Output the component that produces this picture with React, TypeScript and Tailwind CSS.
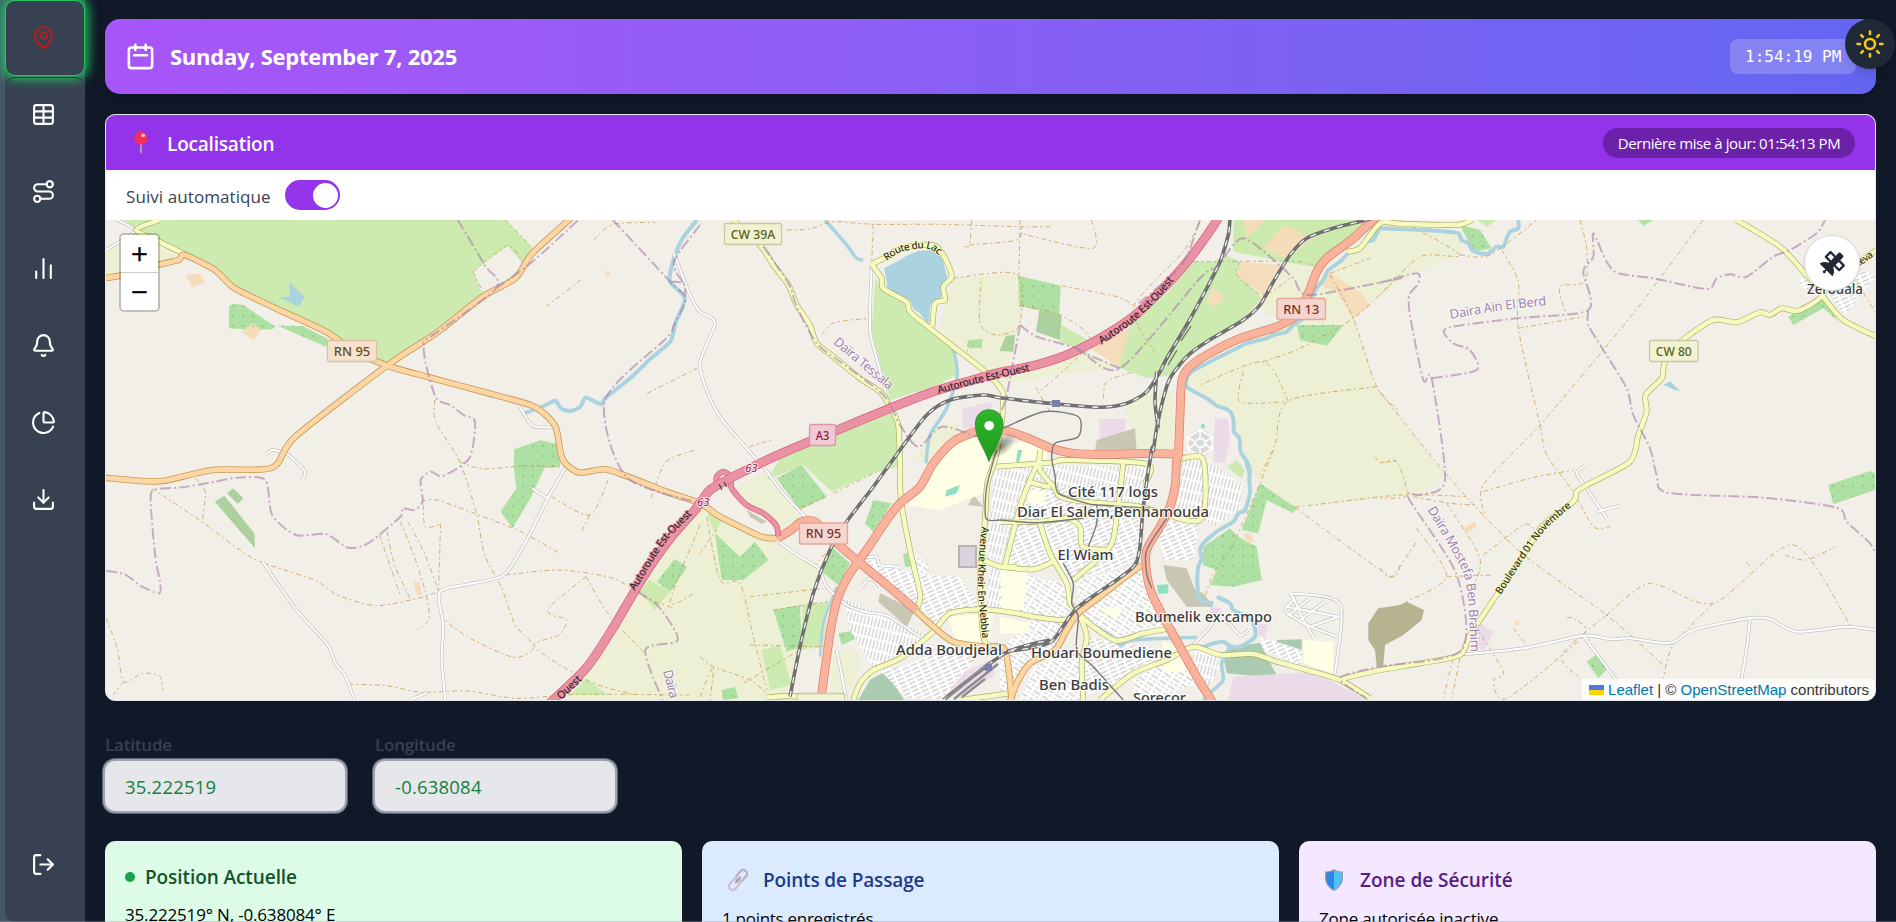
import React from "react";
import {
  Bell,
  ChartNoAxesColumn,
  ChartPie,
  Download,
  LogOut,
  MapPin,
  Route,
  Sun,
  Table,
} from "lucide-react";
import { FaSatellite } from "react-icons/fa6";

type Pt = [number, number];

/* Map survey sheets: origin and scale of each local coordinate grid. */
const SHEETS: Record<string, [number, number, number, number]> = {
  W: [100, 215, 600 / 1568, 1 / 3],
  L: [700, 215, 1 / 3, 1 / 3],
  N: [1000, 215, 1 / 3, 1 / 3],
  S: [700, 450, 1 / 3, 1 / 3],
  C: [1000, 450, 1 / 3, 1 / 3],
  E: [1380, 215, 1 / 3, 1 / 3],
};

function points(src: string): Pt[] {
  let sheet = SHEETS.W;
  const out: Pt[] = [];
  for (const tok of src.trim().split(/\s+/)) {
    if (SHEETS[tok]) {
      sheet = SHEETS[tok];
    } else {
      const [x, y] = tok.split(",").map(Number);
      out.push([sheet[0] + x * sheet[2], sheet[1] + y * sheet[3]]);
    }
  }
  return out;
}

const f = (n: number) => n.toFixed(1);

function area(src: string): string {
  return "M" + points(src).map((p) => `${f(p[0])} ${f(p[1])}`).join("L") + "Z";
}

function curve(src: string): string {
  const p = points(src);
  let d = `M${f(p[0][0])} ${f(p[0][1])}`;
  for (let i = 0; i < p.length - 1; i++) {
    const a = p[i - 1] ?? p[i];
    const b = p[i];
    const c = p[i + 1];
    const e = p[i + 2] ?? c;
    const k = 0.13;
    d += `C${f(b[0] + (c[0] - a[0]) * k)} ${f(b[1] + (c[1] - a[1]) * k)} ${f(c[0] - (e[0] - b[0]) * k)} ${f(c[1] - (e[1] - b[1]) * k)} ${f(c[0])} ${f(c[1])}`;
  }
  return d;
}

const AREAS: [string, string[]][] = [
  ["#eef0d5", [
    "W 16,110 90,50 215,115 200,140 16,180",
    "W 1568,870 1520,930 1420,1100 1330,1290 1190,1455 S 0,750 270,745 300,590 350,400 370,350 340,335 240,285 200,262 120,235 20,180",
    "S 110,110 200,60 300,205 240,240 190,185 130,150",
    "L 755,190 955,178 960,330 905,525 850,465 760,395 720,335",
    "N 0,480 170,430 260,410 350,460 200,475 60,500 0,500",
    "N 370,575 440,530 500,520 520,540 520,705 410,705 400,640",
    "N 1120,40 1200,30 E 245,50 245,115 120,165 0,240 N 1060,310 1130,515 1200,590 E 0,530 195,780 120,840 0,850 C 1200,140 880,170 800,110 750,60 N 700,600 560,500 640,430 930,300 950,200",
    "L 640,740 700,640 790,620 700,745",
    "S 400,600 480,600 470,690 440,745 390,745",
    "N 730,190 850,140 950,165 930,230 880,310 790,300 785,250",
  ]],
  ["#cdebb0", [
    "W 65,15 92,45 155,75 225,120 300,160 350,215 450,270 590,350 640,385 722,430 750,450 845,380 1000,240 975,170 1065,92 1105,145 1135,105 1060,15",
    "L 525,190 550,220 620,265 640,295 690,345 755,390 770,480 700,515 570,555 515,350",
    "L 240,730 350,680 570,590 597,650 S 595,50 520,70 395,125 310,45 200,90",
    "S 310,465 385,455 370,590 300,600",
    "S 20,190 70,205 45,250",
    "S 185,600 240,585 275,705 210,720",
    "N 580,140 640,140 680,120 720,140 730,190 785,250 730,315 600,390 520,480 440,490 350,455 390,330 500,235",
    "N 700,15 1100,15 1040,80 960,160 850,140 700,110",
    "N 185,330 265,375 230,400 180,380",
    "W 1410,1130 1435,1095 1490,1130 1450,1185",
    "W 1270,1390 1325,1440 1230,1440",
    "C 680,50 710,30 735,60 725,85",
    "E 290,15 350,15 320,35",
  ]],
  ["#aee0a3", [
    "W 337,272 350,266 375,270 458,335 450,343 400,345 337,340",
    "W 465,332 530,333 600,375 600,398 580,390",
    "W 1082,703 1150,676 1197,688 1203,755 1162,758 1125,850 1078,940 1047,890 1088,820 1082,760",
    "W 1455,1100 1502,1032 1535,1055 1490,1130",
    "S 230,85 305,45 380,140 300,180",
    "S 520,150 575,160 520,245 495,220",
    "S 395,290 450,340 415,405 365,365",
    "S 45,250 120,320 165,275 205,330 130,390 65,390",
    "S 220,480 300,465 305,590 260,605",
    "S 65,720 105,710 115,745 70,750",
    "S 415,550 470,540 470,565 425,585",
    "S 610,310 630,310 632,350 615,350",
    "S 655,340 680,345 675,370 655,365",
    "L 805,375 848,372 845,400 805,400",
    "N 55,182 182,212 178,300 57,272",
    "N 890,330 1030,330 980,392 900,375",
    "N 545,740 580,740 575,815 545,815",
    "C 780,100 890,175 880,190 800,150 775,250 725,240",
    "C 690,235 715,260 770,290 785,390 700,410 630,405 650,360 608,345 610,290",
    "E 1345,810 1470,768 1485,775 1485,825 1360,868",
    "E 620,1340 650,1318 685,1360 655,1390",
    "E 240,30 300,45 335,100 280,110",
    "E 1225,305 1325,245 1375,320 1330,280 1240,330",
    "E 775,15 820,15 790,32",
  ]],
  ["#add19e", [
    "W 300,860 325,842 403,955 405,1000",
    "W 332,835 348,820 375,850 360,866",
    "N 118,285 185,300 180,375 108,350",
    "L 918,362 945,360 940,410 898,408",
  ]],
  ["#aacbaf", [
    "S 475,750 510,690 555,665 610,745 610,750",
    "C 670,620 700,590 780,578 835,685 680,670",
    "C 155,635 240,625 235,655 155,665",
    "C 830,570 905,568 905,600 830,585",
  ]],
  ["#f5dcba", [
    "W 370,350 400,323 420,345 402,377",
    "W 225,180 262,175 275,202 240,217",
    "W 820,1100 835,1100 842,1140 828,1142",
    "W 1320,168 1332,168 1332,180 1320,180",
    "N 730,15 795,15 740,70",
    "N 850,30 940,70 860,130 790,100",
    "N 725,140 840,150 790,240 710,180",
    "N 640,215 675,250 645,275 620,255",
    "N 990,175 1080,230 1110,270 1060,310 1010,230 960,210",
    "N 270,400 390,340 355,455",
    "C 730,250 750,250 765,275 740,278",
    "E 250,940 285,920 290,935 260,955",
    "E 403,1222 415,1215 420,1228 410,1232",
  ]],
  ["#ebdbe8", [
    "N 297,612 378,612 375,670 300,675",
    "N 645,608 685,612 690,670 675,745 640,740",
    "C 700,680 940,665 1100,750 685,750",
    "C 775,520 805,525 795,565 775,555",
    "C 630,470 665,475 655,510 635,500",
    "E 300,1225 340,1250 310,1310 290,1290",
    "L 785,580 880,560 850,650 790,640",
    "S 740,690 890,620 880,680 740,745",
    "C 410,630 450,630 445,650 410,645",
  ]],
  ["#c7c7b4", [
    "N 290,675 405,640 410,705 285,705",
    "C 490,345 560,355 585,420 610,430 640,470 560,470 500,390",
    "S 540,430 645,480 620,530 535,455",
    "S 820,135 850,170 805,165",
    "S 140,180 200,215 185,222 150,200",
  ]],
  ["#b5b390", [
    "C 1105,520 1135,475 1200,465 E 80,1160 132,1185 125,1215 70,1260 15,1290 10,1350 C 1130,650 1125,600 1105,570",
  ]],
  ["#ffffe5", [
    "L 700,750 760,690 830,665 1040,705 1040,750",
    "S 700,50 745,0 880,0 870,40 850,130 720,180 610,165",
    "C 910,570 1000,575 1000,670 910,640",
    "S 740,500 880,490 870,580 770,570",
    "N 55,680 110,690 115,730 40,740",
  ]],
  ["#8fdfc0", [
    "N 53,705 67,705 58,740 48,740",
    "C 470,405 505,403 505,430 475,432",
    "S 740,120 780,105 770,130 735,140",
    "S 560,550 580,548 585,575 565,570",
    "N 603,628 614,628 614,640 603,640",
  ]],
  ["#aad3df", [
    "W 468,247 495,245 495,203 535,245 520,275",
    "L 552,160 575,148 600,135 620,122 655,108 690,106 712,112 728,135 736,165 742,188 728,215 722,250 700,258 690,275 688,322 680,322 660,295 640,282 632,258 600,240 562,218 558,190",
    "E 850,510 870,498 900,528 885,525",
  ]],
];

const TOWN: [string, string[]][] = [
  ["url(#streetsA)", [
    "S 885,60 C 120,45 440,50 425,170 200,160 130,90 90,90 60,200 0,330 S 860,320",
    "S 430,440 560,500 690,560 520,655 450,540",
    "C 550,30 620,30 725,100 720,180 640,230 600,200 520,200 540,110",
    "C 590,600 650,620 660,650 620,720 570,640",
    "S 870,340 1050,500 860,480",
  ]],
  ["url(#streetsB)", [
    "C 100,90 430,170 410,340 220,390 160,340 90,350 10,345",
    "S 490,320 640,370 780,380 850,480 740,490 690,530 600,440",
    "S 610,650 720,600 840,610 730,745 620,745 540,660",
    "C 250,560 500,600 400,680 250,740",
    "C 780,560 830,575 905,600 905,650 790,600",
    "C 470,215 600,210 580,330 490,330",
    "E 1250,200 1290,170 1330,230 1300,240",
    "E 1340,235 1460,165 1485,190 1395,300",
  ]],
  ["url(#streetsC)", [
    "C 0,360 200,400 230,475 180,510 0,480",
    "C 230,390 410,350 430,370 500,480 530,540 360,560 240,500",
    "C 0,600 100,500 220,520 160,600 60,680 0,740",
    "C 400,690 500,630 560,610 590,700 480,745 400,745",
    "S 630,300 680,340 690,380 650,370",
    "C 100,650 240,600 250,750 60,750",
  ]],
];

const CREAM = [
  "S 915,360 980,370 970,480 905,470",
  "C 80,120 140,125 130,165 85,160",
  "C 485,570 550,600 555,670 490,660",
  "C 0,500 90,520 80,550 0,550",
  "C 300,480 360,470 350,510",
  "C 0,360 80,365 65,480 10,480",
];

const TRACKS = [
  "W 135,820 260,915 400,1030 560,1095 620,1140 720,1172 830,1150 885,1130",
  "W 250,790 275,830 268,915",
  "W 16,1210 45,1300 62,1400 110,1375 155,1382 165,1425",
  "W 62,1400 35,1440",
  "W 875,555 877,620 940,740 985,900 1005,1020 1050,1120 1085,1230 1135,1295 1080,1327 960,1265 895,1210",
  "W 940,740 1000,762 1110,752 1200,757",
  "W 840,860 880,855 990,900 1100,950 1205,1018",
  "W 730,960 785,1140",
  "W 750,950 770,1050 810,1150",
  "W 785,920 820,1020 850,1130 860,1210 830,1245",
  "W 805,920 850,1020 885,1130",
  "W 890,925 885,1125",
  "W 845,870 850,935 890,928",
  "W 1060,1080 1200,1065 1340,1090 1430,1150 1500,1180",
  "W 1270,1085 1175,1175 1180,1200 1220,1215 1200,1260 1135,1295 1280,1400 1400,1440",
  "W 1270,1085 1330,1200 1420,1310",
  "W 1180,845 1280,900 1330,790",
  "W 1280,900 1258,950",
  "W 650,1408 750,1412 840,1432 960,1428 1090,1450 1250,1438 1540,1440",
  "W 1165,275 1260,192",
  "W 1430,535 1560,460",
  "W 1290,75 1340,28 1450,22",
  "W 1440,850 1478,742 1555,705",
  "W 1060,15 1135,105",
  "W 975,170 1065,92 1105,145",
  "W 975,170 1000,230",
  "W 1568,930 1490,1160 1560,1130",
  "L 260,45 330,42 400,20 520,28 720,28 960,35 1050,35",
  "L 520,28 515,145",
  "L 815,15 808,92 785,90",
  "L 808,90 950,75 965,35",
  "L 760,190 950,178 958,330 890,360 840,325 843,190",
  "L 365,358 405,322 510,310",
  "L 805,380 800,420",
  "L 148,695 215,675",
  "N 60,15 57,180",
  "N 275,15 278,100 60,55",
  "N 57,272 180,300 270,380 130,520 110,520 150,590",
  "N 185,212 350,245 400,270",
  "N 600,20 550,110 400,280 470,420",
  "N 580,140 900,140 950,165",
  "N 720,140 710,180 790,240 870,190",
  "N 310,550 320,500 400,470",
  "N 990,180 1060,310 1130,515 1200,590",
  "N 1130,515 865,558 825,690 780,780",
  "N 865,558 790,440 600,510",
  "N 730,470 720,560 860,560",
  "N 790,440 900,400 1060,310 1180,200",
  "N 990,175 1110,130",
  "N 1125,725 1145,742 1195,738",
  "C 820,0 780,100 700,280 640,370 615,440",
  "C 885,172 1200,135 1400,140",
  "C 885,172 1030,280 1175,380 1200,345",
  "S 20,200 60,390 120,400 160,560 200,720",
  "S 150,440 370,415",
  "S 220,480 385,455",
  "S 150,585 375,590",
  "S 0,620 40,650 150,690 200,730",
  "S 0,740 40,650 30,750",
  "S 400,130 530,65",
  "S 290,180 380,140",
  "S 340,350 400,285",
  "S 0,310 50,240",
  "S 130,700 300,600",
  "E 600,15 620,100 615,200 540,215 555,290",
  "E 365,105 415,200 415,340 480,630 500,720 580,830 640,935 690,935",
  "E 970,15 780,270 670,405 480,630 310,810 315,900",
  "E 415,340 610,305",
  "E 310,830 450,790 580,765",
  "E 0,530 200,780 420,1010 680,1200 850,1350",
  "E 100,845 210,865 285,870",
  "E 200,865 300,1030 270,1140",
  "E 0,745 50,740 80,840 0,850",
  "E 0,1060 35,1085 110,980",
  "E 110,940 200,1085 80,1160",
  "E 200,1085 340,1080",
  "E 310,1020 430,930 460,940",
  "E 680,1200 810,1105 1000,1165 1240,990 1410,1230",
  "E 1000,1165 880,1290 850,1390",
  "E 1215,1020 1280,1035 1365,995",
  "E 1100,1040 1115,1060",
  "E 560,1210 580,1210 610,1262 380,1450 340,1395 370,1370 290,1240",
  "E 680,1200 545,1320 600,1390",
  "E 220,1330 190,1450",
  "E 240,1330 215,1450",
  "E 400,1240 440,1290",
  "E 60,15 240,120 120,125 0,240",
  "E 1430,200 1485,290",
  "E 240,120 330,120 470,15",
];

const BOUNDS = [
  "W 16,1068 65,1078 110,1115 155,1135 157,1100 145,1030 133,870 140,825 215,817 300,800 360,788 432,795 450,900 512,960 590,957 648,998 700,985 785,905 790,880 820,885 843,860 838,795 865,770 895,783 965,730 980,620 950,600 915,570 878,548 850,440 845,380",
  "W 935,15 1005,150 1035,220 845,380",
  "W 1035,220 1130,140 1250,15",
  "W 1340,15 1490,200 1530,250 1500,330 1480,370 1320,555 1375,785 1568,865",
  "W 1490,200 1525,205 1530,245",
  "W 1568,30 1500,140 1525,205",
  "W 1405,1130 1460,1175 1510,1275 1425,1305 1470,1455",
  "L 190,95 265,205 290,275 350,385 420,440 550,540 600,630 655,695 725,635 830,665",
  "N 60,330 20,540 0,600",
  "N 60,330 110,365 230,400 360,460 600,190 650,155 725,70 810,125 880,190 930,240 1200,190 E 0,203 110,175 115,205 88,240 90,300 130,495 155,490 195,795 120,840 85,848 230,1080 245,1305 0,1355 C 1020,685 1100,745",
  "N 360,460 230,405",
  "N 600,15 545,150 410,270",
  "E 155,490 290,465 270,405 220,385 200,340 410,310 625,285 610,170 640,125 640,55 680,140 715,175 820,190 980,222 1010,190 1050,178 1100,185 1180,125 1230,105 1310,55 1335,15",
  "E 625,285 625,330 670,405 740,520 760,600 810,700 830,780 862,833 1150,848 1370,878 1400,920 1470,985 1485,1015",
];

const STREAMS: [number, string][] = [
  [4, "W 1560,15 1520,75 1495,150 1490,200 1528,250 1505,320 1490,380 1440,430 1390,485 1320,550 1310,568 1270,548 1255,575 1230,588 1205,580 1190,557 1165,570 1110,595"],
  [3.5, "L 375,15 440,90 470,130 490,135"],
  [3.5, "L 760,400 772,480 740,580 690,660 678,745"],
  [4, "N 1145,35 1130,55 1120,75 1095,80 1080,100 1050,110 1020,140 985,165 970,195 945,225 930,270 910,310 880,330 860,350 820,360 800,370 740,385 700,405 640,435 570,475 560,515 620,550 650,572 685,585 700,610 702,650 718,670 722,710 740,740 748,775 C 738,30 750,60 748,90 750,130 735,180 715,190 700,215 650,245 610,280 600,300 605,325 595,350 592,400 600,450 640,460"],
  [4, "C 650,440 690,460 700,480 740,500 760,520 765,560 720,590 690,588 670,575 640,580 610,590 600,590"],
  [3.5, "C 690,590 665,640 670,690 640,720 610,750"],
  [3.5, "C 260,515 330,555 360,585 400,570 590,562"],
  [4, "E 0,40 130,45 200,50 235,55 245,75 265,85 280,108 320,117 350,95 370,95 380,70 390,50 415,40 415,15"],
  [2.5, "S 410,410 370,520 360,620"],
  [3.5, "C 80,650 40,730"],
];

const MINOR = [
  "W 16,105 90,48 45,15",
  "W 1095,572 1130,632 1185,637",
  "W 435,718 450,705 490,718 535,768 528,795",
  "W 425,1040 510,1180 595,1290 615,1345 640,1380 665,1455",
  "W 1215,760 1170,850 1115,975 1055,1080 960,1108 887,1132 897,1230 893,1330 902,1455",
  "W 810,1455 855,1433",
  "W 1130,820 1170,850",
  "L 515,150 510,340 530,430 565,565",
  "L -78,115 -30,240 0,290 45,325 0,450 50,590 140,700 180,745 S 190,50 250,130 330,215",
  "S 235,275 300,320 355,355 380,410 440,465 500,487 560,497 660,560",
  "S 410,600 440,750",
  "E 250,1318 430,1300 610,1262 690,1273 750,1270 830,1282 880,1282 940,1245 1105,1210 1170,1212 1250,1250 1400,1235 1485,1245",
  "E 1110,1212 1100,1300 1080,1420",
  "E 610,1262 720,1410",
  "E 615,752 590,775 620,820 680,910",
  "E 650,890 720,872",
  "C 870,430 1020,462 1005,670",
  "C 870,430 880,450 855,480 910,520 1010,560",
  "C 860,470 1015,500",
  "C 880,440 905,500 940,560",
  "C 930,445 860,500",
  "C 975,455 900,510",
  "C 1015,500 930,530",
  "C 575,590 630,530 660,480",
  "C 680,510 720,555 745,540",
  "S 490,325 530,320 540,345 600,350",
  "S 485,410 510,385 540,410",
];

const YELLOW = [
  "W 155,15 95,45 155,80 222,118",
  "L 100,15 180,90 220,150 265,210 290,270 330,330 350,385 400,425 480,490 540,530 570,575 595,630 600,750 S 603,150 630,300 660,430 655,465 645,482",
  "L 515,148 560,125 590,105 660,90 710,95 740,140 755,185 730,215 735,255 705,265 697,335",
  "L 515,148 545,190 550,220 620,260 630,290 690,340 760,395 850,465 905,525 910,560 900,660 S 885,30 862,100 855,210 845,300 840,400 850,560 870,590",
  "S 460,750 480,700 520,660 600,625 700,545 750,490 850,478 950,490 C 100,500 190,510 235,490",
  "S 890,50 1050,38 C 200,30 440,42 435,100",
  "C 120,0 120,60 165,115 180,140 250,155 420,170 600,210 610,30 545,25",
  "C 0,350 100,358 160,335",
  "C 15,345 60,170 90,90 115,35",
  "C 90,97 150,112",
  "C 0,215 120,215 200,205 240,230 248,290 330,300",
  "C 120,220 150,310 200,400 210,460 235,490 260,560 245,640 250,750",
  "C 370,40 350,200 330,290 220,390",
  "S 850,330 900,350 950,350",
  "C 240,495 280,530 350,572 430,550 510,535",
  "C 300,750 400,670 500,630 580,590 660,615 760,612 830,635 920,660 1020,690 1110,745",
  "C 1020,688 1140,660 E 120,1345 240,1320 270,1260 350,1140 430,1020 490,930 580,860 590,830 620,810 750,740 775,660 800,590 797,540 845,490 855,440 905,378 1000,315 1070,322 1140,292 1170,300 1205,280 1255,287 1325,240 1270,170 1200,95 1070,15",
  "E 1325,240 1390,315 1490,365",
  "E 1325,240 1440,140 1490,105",
  "N 1040,110 1080,100 1140,25 1200,26 E 230,30 280,12",
  "S 200,742 270,738 350,745",
  "S 780,750 930,730",
];

const ORANGE = [
  "W 10,190 60,180 150,150 205,135 222,120 300,165 350,218 450,275 590,350 660,405 750,452 860,487 1000,530 1125,570 1165,600 1192,640 1205,720 1220,750 1255,773 1320,763 1380,785 1480,830 1568,865 S 60,200 140,240 190,262 230,265",
  "W 10,788 110,798 170,797 295,765 450,758 510,665 750,452 845,380 890,345 1000,245 1085,190 1130,115 1230,10",
  "S 645,480 700,530 760,575 850,590 915,600 935,750",
  "C 425,345 370,385 300,440 235,490 200,540 165,600 90,640 50,700 30,755",
];

const TRUNK = [
  "S 232,265 275,238 305,215 345,215 400,270 475,335 560,405 648,480",
  "N 545,718 450,715 330,718 220,715 150,698 80,668 10,645 L 830,650 760,680 700,745 S 660,110 600,160 560,210 500,300 450,370 415,440 395,520 380,620 362,755",
  "N 1130,5 1060,70 980,130 950,170 925,235 890,300 830,335 720,370 620,420 565,460 545,500 540,600 535,720 C 530,30 525,110 510,170 480,230 440,300 440,370 455,430 490,500 540,590 590,680 640,760",
];

const MOTORWAY =
  "W 1170,1470 1270,1360 1340,1240 1420,1085 1490,970 1555,885 S 30,120 90,85 180,40 L 280,700 400,650 570,580 700,530 800,500 900,472 N 100,452 200,420 300,370 400,305 480,230 545,160 600,90 655,10";
const RAMP = "S 50,105 50,80 70,65 92,80 95,115 140,165 190,190 228,225 235,258";

const RAILS = [
  "S 270,740 300,590 340,430 390,300 440,215 520,110 600,0 L 680,600 750,555 850,540 N 0,548 150,565 300,577 380,565 440,530 480,470 500,430 560,330 620,220 660,140 685,60 690,10",
  "N 1110,12 1000,40 920,70 870,120 820,200 780,270 730,315 620,380 560,425 510,490 490,550 470,640 460,705 C 455,0 430,170 420,290 405,345 350,390 230,475 160,570 110,590 20,605",
  "N 470,470 465,560 475,640",
  "S 730,750 915,610 1050,570",
];

const SIDINGS = [
  "L 910,640 1030,590 N 235,605 235,665 165,685 155,730 165,780 C 175,130 260,160 300,165 450,175",
  "C 0,210 110,218 250,205",
  "C 290,165 290,220 265,290",
  "C 190,340 220,400 215,460 235,500 230,600 280,650 370,750",
  "S 890,0 860,110 858,205 900,210",
  "C 500,205 440,300 440,370 455,415",
];

function Lines({ data, color, width, dash, opacity }: {
  data: string[];
  color: string;
  width: number;
  dash?: string;
  opacity?: number;
}) {
  return (
    <g fill="none" stroke={color} strokeWidth={width} strokeDasharray={dash} strokeLinejoin="round" opacity={opacity}>
      {data.map((d) => (
        <path key={d} d={curve(d)} />
      ))}
    </g>
  );
}

function Shield({ x, y, w, text, fill, line, ink }: {
  x: number;
  y: number;
  w: number;
  text: string;
  fill: string;
  line: string;
  ink: string;
}) {
  return (
    <g>
      <rect x={x} y={y} width={w} height="21" rx="2" fill={fill} stroke={line} strokeWidth="1.3" />
      <text
        x={x + w / 2}
        y={y + 15.2}
        textAnchor="middle"
        fontSize="13"
        fontWeight="500"
        fill={ink}
        textLength={w - 12.5}
        lengthAdjust="spacingAndGlyphs"
      >
        {text}
      </text>
    </g>
  );
}

const PLACES: [string, number, number, number][] = [
  ["Cité 117 logs", 1068, 497, 90],
  ["Diar El Salem,Benhamouda", 1017, 516.5, 192],
  ["El Wiam", 1057.5, 559.5, 56],
  ["Boumelik ex:campo", 1135, 622, 137],
  ["Adda Boudjelal", 896, 655, 106],
  ["Houari Boumediene", 1031, 658, 141],
  ["Ben Badis", 1039, 689.5, 70],
  ["Sorecor", 1133, 702.5, 53],
  ["Zerouala", 1807, 294, 56],
];

function CityMap() {
  return (
    <svg viewBox="106 220 1769 480" preserveAspectRatio="none" className="block h-full w-full font-['Noto_Sans',sans-serif]">
      <defs>
        <pattern id="streetsA" width="7.2" height="11" patternUnits="userSpaceOnUse" patternTransform="rotate(14)">
          <rect width="7.2" height="11" fill="#d8d7d5" />
          <path d="M1 0V11M4.600 0V11M0 1.500H7.200" stroke="#fff" strokeWidth="2" />
        </pattern>
        <pattern id="streetsB" width="9" height="8" patternUnits="userSpaceOnUse" patternTransform="rotate(-24)">
          <rect width="9" height="8" fill="#dad9d7" />
          <path d="M0 1H9M0 4.800H9M2 0V8" stroke="#fff" strokeWidth="2.200" />
        </pattern>
        <pattern id="streetsC" width="10" height="8.600" patternUnits="userSpaceOnUse" patternTransform="rotate(33)">
          <rect width="10" height="8.600" fill="#dcdbd9" />
          <path d="M0 1H10M0 5.200H10M2 0V8.600M7 0V5" stroke="#fff" strokeWidth="2.300" />
        </pattern>
        <pattern id="orchard" width="10" height="10" patternUnits="userSpaceOnUse">
          <circle cx="3" cy="6" r="0.8" fill="#6fae69" />
        </pattern>
        <path id="way1" d={curve("L 716,536 800,513 880,493 1010,463")} />
        <path id="way2" d={curve("N 305,388 400,322 470,255 525,192")} />
        <path id="way3" d={curve("W 1398,1128 1450,1030 1490,965 1555,890")} />
        <path id="way4" d={curve("W 1205,1455 1262,1392")} />
        <path id="lakeRoad" d={curve("L 560,138 600,112 660,100 695,105 728,130")} />
        <path id="avenue" d={curve("S 845,230 836,330 834,430 848,575")} />
        <path id="boulevard" d={curve("E 362,1140 440,1020 500,940 580,870")} />
        <path id="tessala" d={curve("L 398,385 470,445 570,528")} />
        <path id="berd" d={curve("E 212,312 350,288 500,270")} />
        <path id="brahim" d={curve("E 142,885 200,980 250,1075 265,1160 272,1315")} />
        <linearGradient id="pinGreen" x1="0" y1="0" x2="0" y2="1">
          <stop offset="0" stopColor="#2fb52c" />
          <stop offset="1" stopColor="#1f9a1d" />
        </linearGradient>
        <radialGradient id="pinShade">
          <stop offset="0" stopColor="#000" stopOpacity="0.5" />
          <stop offset="1" stopColor="#000" stopOpacity="0" />
        </radialGradient>
      </defs>
      <rect x="106" y="220" width="1769" height="480" fill="#f2efe9" />

      {AREAS.map(([fill, list]) => (
        <g key={fill} fill={fill}>
          {list.map((d) => (
            <path key={d} d={area(d)} />
          ))}
        </g>
      ))}
      <g fill="url(#orchard)">
        {AREAS[2][1].map((d) => (
          <path key={d} d={area(d)} />
        ))}
      </g>
      {TOWN.map(([fill, list]) => (
        <g key={fill} fill={fill}>
          {list.map((d) => (
            <path key={d} d={area(d)} />
          ))}
        </g>
      ))}
      <g fill="#ffffe5">
        {CREAM.map((d) => (
          <path key={d} d={area(d)} />
        ))}
      </g>
      <rect x="959" y="546" width="17" height="21" fill="#d9d4dc" stroke="#b9b4b4" strokeWidth="2" />

      {STREAMS.map(([w, d]) => (
        <path key={d} d={curve(d)} fill="none" stroke="#aad3df" strokeWidth={w} strokeLinejoin="round" />
      ))}
      <Lines data={TRACKS} color="#c8a055" width={1} dash="5 3 2 3" opacity={0.8} />
      <Lines data={MINOR} color="#c4c2c2" width={3.4} />
      <Lines data={MINOR} color="#ffffff" width={2} />
      <g transform="translate(1200 443)">
        <circle r="13" fill="#dcdad8" />
        <path d="M-12 -6L0 -13L12 -6V6L0 13L-12 6ZM-5 0L-2 -4H3L6 0L3 4H-2ZM0 -13V-4M0 4V13M-12 -6L-5 -1M12 6L5 1M-12 6L-5 1M12 -6L5 -1" fill="none" stroke="#fff" strokeWidth="1.6" />
      </g>
      <Lines data={YELLOW} color="#a8ad6a" width={5.8} />
      <Lines data={YELLOW} color="#f7fabf" width={4.5} />
      <Lines data={ORANGE} color="#c99a55" width={6.6} />
      <Lines data={ORANGE} color="#fcd6a4" width={4.9} />
      <Lines data={TRUNK} color="#dd7d62" width={8.8} />
      <Lines data={TRUNK} color="#f9b29c" width={7.4} />
      <Lines data={[RAMP]} color="#dc5a83" width={5.8} />
      <Lines data={[RAMP]} color="#e892a2" width={4.4} />
      <Lines data={[MOTORWAY]} color="#dc5a83" width={9.2} />
      <Lines data={[MOTORWAY]} color="#e892a2" width={7.8} />
      <path d="M719 484L722 490M724 482L727 487" stroke="#4b4b4b" strokeWidth="1.2" />
      <Lines data={SIDINGS} color="#7a7a7a" width={1.4} />
      <Lines data={RAILS} color="#707070" width={3.6} />
      <Lines data={RAILS} color="#f5f5f5" width={1.3} dash="6 8" />
      <path d="M1178 338L1188 323M1181 341L1191 326M1165 363L1174 348M1168 365L1177 350" stroke="#6f6f6f" strokeWidth="1.3" />
      <path d="M946 699L990 662M954 699L998 664M962 697L985 679" stroke="#8c8c8c" strokeWidth="2.4" />
      <Lines data={BOUNDS} color="#a983aa" width={2} dash="11 3 2 3" opacity={0.62} />
      <rect x="1052" y="400" width="8" height="7" fill="#7a7fb2" />
      <rect x="985" y="664" width="7" height="7" fill="#7a7fb2" />

      <Shield x={327.5} y={340.5} w={49} text="RN 95" fill="#f6e3cf" line="#dcc0a0" ink="#664a18" />
      <Shield x={724.5} y={223.5} w={57} text="CW 39A" fill="#f1f2d2" line="#c7caa0" ink="#5a6020" />
      <Shield x={809.5} y={424.5} w={26} text="A3" fill="#efc9d3" line="#d998ab" ink="#8b1d3f" />
      <Shield x={799.5} y={523} w={48} text="RN 95" fill="#f7d5ce" line="#e3a799" ink="#7a3526" />
      <Shield x={1277} y={298.5} w={48.5} text="RN 13" fill="#f7d5ce" line="#e3a799" ink="#7a3526" />
      <Shield x={1649.5} y={340.5} w={48.5} text="CW 80" fill="#f1f2d2" line="#c7caa0" ink="#5a6020" />
      <rect x="797" y="693.5" width="48" height="21" rx="2" fill="#f1f2d2" stroke="#c7caa0" strokeWidth="1.3" />

      <g fontSize="10.6" fontWeight="500" fill="#3a2530" stroke="#e892a2" strokeWidth="1.5" strokeLinejoin="round" paintOrder="stroke">
        <text textLength="94"><textPath href="#way1">Autoroute Est-Ouest</textPath></text>
        <text textLength="97"><textPath href="#way2">Autoroute Est-Ouest</textPath></text>
        <text textLength="96"><textPath href="#way3">Autoroute Est-Ouest</textPath></text>
        <text textLength="29"><textPath href="#way4">Ouest</textPath></text>
      </g>
      <g fontSize="10.2" fontWeight="500" fill="#2f2f1f" stroke="#f7fabf" strokeWidth="1.8" strokeLinejoin="round" paintOrder="stroke">
        <text textLength="57"><textPath href="#lakeRoad">Route du Lac</textPath></text>
        <text textLength="112"><textPath href="#avenue">Avenue Kheir En-Nebbia</textPath></text>
        <text textLength="114"><textPath href="#boulevard">Boulevard 01 Novembre</textPath></text>
        <text x="1860" y="266" transform="rotate(-36 1860 266)" textLength="17">leva</text>
      </g>
      <g fontSize="13" fill="#a285ad" stroke="#fff" strokeOpacity="0.6" strokeWidth="2" strokeLinejoin="round" paintOrder="stroke">
        <text textLength="73"><textPath href="#tessala">Daïra Tessala</textPath></text>
        <text textLength="97"><textPath href="#berd">Daïra Aïn El Berd</textPath></text>
        <text textLength="152"><textPath href="#brahim">Daïra Mostefa Ben Brahim</textPath></text>
        <text x="663" y="671" transform="rotate(76 663 671)" textLength="29">Daïra</text>
      </g>
      <g fontSize="11.5" fontWeight="500" fontStyle="italic" fill="#b02a45" stroke="#fff" strokeWidth="1.6" paintOrder="stroke">
        <text x="745" y="472">63</text>
        <text x="697" y="506">63</text>
      </g>
      <g fontSize="14.6" fontWeight="500" fill="#3c3c3c" stroke="#fff" strokeOpacity="0.75" strokeWidth="2.4" strokeLinejoin="round" paintOrder="stroke">
        {PLACES.map(([name, x, y, len]) => (
          <text key={name} x={x} y={y} textLength={len} lengthAdjust="spacingAndGlyphs">
            {name}
          </text>
        ))}
      </g>

      <ellipse cx="1001" cy="446" rx="19" ry="9" transform="rotate(-38 1001 446)" fill="url(#pinShade)" />
      <path d="M989 461.500C985 449 975.300 438 975.300 424.500C975.300 415.500 981 409.800 989 409.800S1003 415.500 1003 424.500C1003 438 993.500 449 989 461.500Z" fill="url(#pinGreen)" stroke="#238a22" strokeWidth="0.8" />
      <circle cx="989.200" cy="425.700" r="4.800" fill="#fff" />
    </svg>
  );
}

function CalendarIcon() {
  return (
    <svg viewBox="0 0 24 24" className="h-[31px] w-[31px]" fill="none" stroke="currentColor" strokeWidth="2" strokeLinecap="round" strokeLinejoin="round">
      <path d="M8 7V3m8 4V3m-9 8h10M5 21h14a2 2 0 002-2V7a2 2 0 00-2-2H5a2 2 0 00-2 2v12a2 2 0 002 2z" />
    </svg>
  );
}

function PushPin() {
  return (
    <svg viewBox="0 0 24 24" className="h-6 w-6">
      <path d="M10.900 13h2.200v8l-1.100 2-1.100-2z" fill="#a99ab5" />
      <circle cx="12" cy="7.200" r="6.500" fill="#f4305a" />
      <ellipse cx="14.200" cy="4.400" rx="2" ry="1.600" fill="#ffc0cd" />
    </svg>
  );
}

function LinkIcon() {
  return (
    <svg viewBox="0 0 24 24" className="h-6 w-6" fill="none" strokeLinecap="round">
      <g transform="rotate(40 12 12)">
        <rect x="8.300" y="0" width="7.400" height="13" rx="3.700" stroke="#bfb1c5" strokeWidth="2.300" />
        <rect x="8.300" y="11" width="7.400" height="13" rx="3.700" stroke="#cfc0d0" strokeWidth="2.300" />
        <path d="M12 8.500v7" stroke="#a897b2" strokeWidth="1.800" />
      </g>
    </svg>
  );
}

function ShieldIcon() {
  return (
    <svg viewBox="0 0 24 24" className="h-6 w-6">
      <path d="M12 1C9 3 6 3.500 3 3.500V10c0 6 4 10.500 9 13 5-2.500 9-7 9-13V3.500C18 3.500 15 3 12 1z" fill="#9b9ba8" />
      <path d="M12 2.500C9.500 4 7 4.600 4.300 4.700V10c0 5.400 3.300 9.200 7.700 11.600z" fill="#2e86ea" />
      <path d="M12 2.500c2.500 1.500 5 2.100 7.700 2.200V10c0 5.400-3.300 9.200-7.700 11.600z" fill="#50c3fb" />
    </svg>
  );
}

const NAV = [
  { id: "table", Icon: Table },
  { id: "route", Icon: Route },
  { id: "chart", Icon: ChartNoAxesColumn },
  { id: "alerts", Icon: Bell },
  { id: "stats", Icon: ChartPie },
  { id: "export", Icon: Download },
];

function Sidebar() {
  return (
    <aside className="flex h-full w-[85px] shrink-0 bg-[#43566a] pl-[5px]">
      <nav className="flex h-full w-20 flex-col rounded-l-[10px] bg-[#384151] text-white">
        <button className="relative z-10 flex h-[75.500px] items-center justify-center rounded-[10px] border border-[#22c55e] bg-[#384151] pr-[3px] text-[#b91c1c] shadow-[0_0_11px_3px_#22c55e]">
          <MapPin size={25} />
        </button>
        {NAV.map(({ id, Icon }, i) => (
          <button
            key={id}
            className={
              i === 0
                ? "relative z-20 mt-px flex h-[76px] items-center justify-center rounded-t-[10px] border-t border-[#2b3442] pr-[3px] pb-[2px]"
                : "mt-px flex h-[76px] items-center justify-center pr-[3px]"
            }
          >
            <Icon size={25} />
          </button>
        ))}
        <button className="mt-auto mb-[20px] flex h-[76px] items-center justify-center pr-[3px]">
          <LogOut size={25} />
        </button>
      </nav>
    </aside>
  );
}

function Field({ label, value }: { label: string; value: string }) {
  return (
    <div className="w-[240px]">
      <div className="h-[31px] pt-px text-[17px] leading-[27px] font-semibold tracking-[-0.200px] text-[#374151]">{label}</div>
      <div className="flex h-[50px] items-center rounded-[10px] bg-[#e5e7eb] px-5 pt-px text-[18.500px] tracking-[0.200px] text-[#15803d] shadow-[0_0_0_2px_#9ca3af,0_0_0_3px_#5b6472]">
        {value}
      </div>
    </div>
  );
}

export default function App() {
  return (
    <div className="relative flex h-[922px] w-full overflow-hidden bg-[#111827] font-['Open_Sans','Noto_Sans',sans-serif]">
      <Sidebar />
      <main className="flex min-w-0 flex-1 flex-col pt-[19px] pr-5 pl-5">
        <header className="flex h-[75px] shrink-0 items-center justify-between rounded-[15px] bg-linear-to-r from-[#a855f7] to-[#6366f1] px-5 text-white shadow-lg">
          <div className="flex items-center gap-[14px]">
            <CalendarIcon />
            <h1 className="text-[22px] font-bold tracking-[-0.260px] whitespace-nowrap">Sunday, September 7, 2025</h1>
          </div>
          <div className="flex h-[35px] w-[126px] items-center rounded-[8px] bg-white/20 pl-[15px] font-['DejaVu_Sans_Mono',monospace] text-[16px] whitespace-nowrap">
            1:54:19 PM
          </div>
        </header>

        <section className="mt-5 flex h-[587px] shrink-0 flex-col overflow-hidden rounded-[10px] border border-[#e5e7eb] bg-white">
          <div className="flex h-[55px] shrink-0 items-center justify-between bg-[#9333ea] pr-5 pl-[23px] text-white">
            <div className="flex items-center gap-[14px]">
              <PushPin />
              <h2 className="pt-[3px] text-[19px] font-semibold tracking-[-0.200px]">Localisation</h2>
            </div>
            <span className="flex h-[30px] w-[252px] items-center justify-center rounded-full bg-[#6b21a8] pt-px text-[15px] tracking-[-0.420px] whitespace-nowrap">
              Dernière mise à jour: 01:54:13 PM
            </span>
          </div>
          <div className="flex h-[50px] shrink-0 items-center gap-[15px] bg-white pl-5">
            <span className="w-[144px] pt-[3px] text-[17px] font-medium tracking-[0.080px] whitespace-nowrap text-[#374151]">Suivi automatique</span>
            <span className="flex h-[30px] w-[55px] items-center justify-end rounded-full bg-[#9333ea] pr-[2px]">
              <span className="h-[25px] w-[25px] rounded-full bg-white" />
            </span>
          </div>
          <div className="relative min-h-0 flex-1">
            <CityMap />
            <div className="absolute top-[13px] left-[13px] flex flex-col overflow-hidden rounded-[5px] border-2 border-black/20 bg-clip-padding font-['DejaVu_Sans',sans-serif] text-[22px] text-black">
              <button className="flex h-[38px] w-[37px] items-center justify-center border-b border-[#ccc] bg-white pb-px [-webkit-text-stroke:0.500px_#000]">+</button>
              <button className="flex h-[37px] w-[37px] items-center justify-center bg-white pb-px [-webkit-text-stroke:0.500px_#000]">−</button>
            </div>
            <button className="absolute top-[15px] right-[15px] flex h-[56px] w-[56px] items-center justify-center rounded-full border border-[#d6dae0] bg-white text-[#1f2937] shadow-sm">
              <FaSatellite size={25} />
            </button>
            <div className="absolute right-0 bottom-0 flex h-[21px] items-center bg-white/80 pt-px pr-[6px] pl-[7px] font-['Liberation_Sans',Arial,sans-serif] text-[15px] whitespace-nowrap text-[#333]">
              <span className="mr-1 flex h-[10px] w-[15px] flex-col">
                <span className="flex-1 bg-[#4c7be1]" />
                <span className="flex-1 bg-[#ffd500]" />
              </span>
              <span className="text-[#0078a8]">Leaflet</span>
              <span className="whitespace-pre"> | © </span>
              <span className="text-[#0078a8]">OpenStreetMap</span>
              <span className="whitespace-pre"> contributors</span>
            </div>
          </div>
        </section>

        <div className="mt-[29px] flex shrink-0 gap-[30px]">
          <Field label="Latitude" value="35.222519" />
          <Field label="Longitude" value="-0.638084" />
        </div>

        <div className="mt-[30px] grid shrink-0 grid-cols-3 gap-5">
          <div className="h-[160px] rounded-[10px] bg-[#dcfce7] px-5 pt-5">
            <div className="flex h-[32px] items-center gap-[10px]">
              <span className="-mt-px h-[10px] w-[10px] rounded-full bg-[#16a34a]" />
              <h3 className="text-[19px] font-semibold tracking-[-0.080px] text-[#14532d]">Position Actuelle</h3>
            </div>
            <p className="mt-[8px] text-[17px] leading-[28px] tracking-[-0.170px] text-black">35.222519° N, -0.638084° E</p>
          </div>
          <div className="h-[160px] rounded-[10px] bg-[#dbeafe] px-5 pt-5">
            <div className="flex h-[38px] items-center gap-[13px] pl-[4px]">
              <LinkIcon />
              <h3 className="text-[19px] font-semibold tracking-[-0.140px] text-[#1e3a8a]">Points de Passage</h3>
            </div>
            <p className="mt-[6px] text-[17px] leading-[28px] tracking-[-0.280px] text-black">1 points enregistrés</p>
          </div>
          <div className="h-[160px] rounded-[10px] bg-[#f3e8ff] px-5 pt-5">
            <div className="flex h-[38px] items-center gap-[14px] pl-[3px]">
              <ShieldIcon />
              <h3 className="text-[19px] font-semibold tracking-[-0.020px] text-[#581c87]">Zone de Sécurité</h3>
            </div>
            <p className="mt-[6px] text-[17px] leading-[28px] tracking-[-0.210px] text-black">Zone autorisée inactive</p>
          </div>
        </div>
      </main>
      <button className="absolute top-[19px] right-[1px] flex h-[50px] w-[50px] items-center justify-center rounded-full bg-[#1f2937] text-[#facc15] shadow-lg">
        <Sun size={30} />
      </button>
      <div className="absolute right-0 bottom-0 left-0 h-px bg-[#9ca3af]/40" />
    </div>
  );
}
